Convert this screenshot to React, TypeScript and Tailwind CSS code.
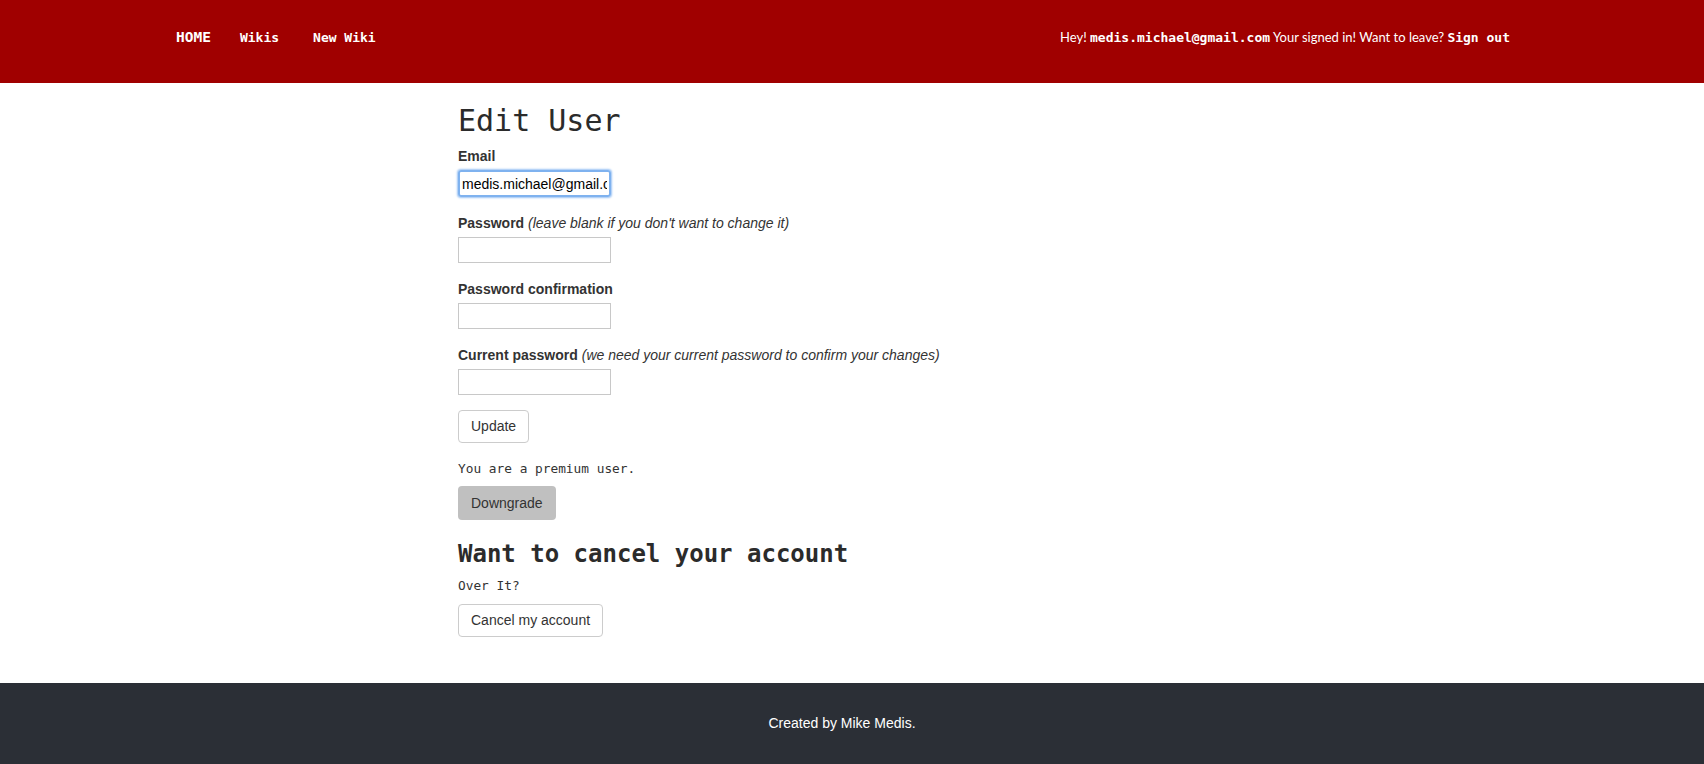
import { useState } from 'react';

const mono = "font-['DejaVu_Sans_Mono','Liberation_Mono',monospace]";
const sans = "font-['Liberation_Sans',Arial,sans-serif]";

function Field({
  label,
  hint,
  value,
  focused,
  type = 'password',
}: {
  label: string;
  hint?: string;
  value?: string;
  focused?: boolean;
  type?: string;
}) {
  const [val, setVal] = useState(value ?? '');
  return (
    <div className="flex flex-col">
      <label className="text-[14px] leading-[20px] text-[#333]">
        <span className="font-bold">{label}</span>
        {hint && <i> ({hint})</i>}
      </label>
      <input
        type={type}
        value={val}
        onChange={e => setVal(e.target.value)}
        className={
          focused
            ? 'mt-[4px] w-[153px] h-[27px] px-[2px] text-[14px] text-black border-2 border-[#7fb2ef] rounded-[3px] shadow-[0_0_2px_1px_#9cc4f5] outline-none'
            : 'mt-[4px] w-[153px] h-[26px] px-[3px] text-[14px] text-black border border-[#c8c8c8] outline-none'
        }
      />
    </div>
  );
}

export default function App() {
  return (
    <div className={`min-h-screen flex flex-col bg-white ${sans}`}>
      <header className="h-[83px] bg-[#a00000] flex justify-between items-start pt-[27px] pl-[176px] pr-[194px] text-white">
        <nav className={`flex items-center gap-[29px] ${mono} text-[13px]`}>
          <a className="font-bold text-[14.5px]">HOME</a>
          <a className="font-bold">Wikis</a>
          <a className="font-bold ml-[5px]">New Wiki</a>
        </nav>
        <div className="text-[13px] font-['Lato','Open_Sans',sans-serif] leading-[20px]">
          Hey! <span className={`${mono} font-bold`}>medis.michael@gmail.com</span> Your signed in! Want to leave?{' '}
          <span className={`${mono} font-bold`}>Sign out</span>
        </div>
      </header>

      <main className="w-[788px] mx-auto flex flex-col pt-[20px] pb-[45px] text-[#333]">
        <h1 className={`${mono} text-[30px] leading-[36px] text-[#2b2b2b]`}>Edit User</h1>

        <div className="mt-[7px] flex flex-col gap-[16px]">
          <Field label="Email" value="medis.michael@gmail.com" type="email" focused />
          <Field label="Password" hint="leave blank if you don't want to change it" />
          <Field label="Password confirmation" />
          <Field label="Current password" hint="we need your current password to confirm your changes" />
        </div>

        <button className="mt-[15px] self-start h-[33px] px-[12px] text-[14px] text-[#333] bg-white border border-[#ccc] rounded-[4px]">
          Update
        </button>

        <p className={`mt-[16px] ${mono} text-[12.8px] leading-[20px]`}>You are a premium user.</p>

        <button className="mt-[7px] self-start h-[34px] px-[13px] text-[14px] text-[#333] bg-[#c0c0c0] rounded-[4px]">
          Downgrade
        </button>

        <h2 className={`mt-[18px] ${mono} font-bold text-[24px] leading-[32px] text-[#2b2b2b]`}>
          Want to cancel your account
        </h2>
        <p className={`mt-[6px] ${mono} text-[12.8px] leading-[20px]`}>Over It?</p>
        <button className="mt-[8px] self-start h-[33px] px-[12px] text-[14px] text-[#333] bg-white border border-[#ccc] rounded-[4px]">
          Cancel my account
        </button>
      </main>

      <footer className="mt-auto h-[81px] bg-[#2b2f36] flex items-center justify-center pr-[20px] text-white text-[14px]">
        Created by Mike Medis.
      </footer>
    </div>
  );
}
